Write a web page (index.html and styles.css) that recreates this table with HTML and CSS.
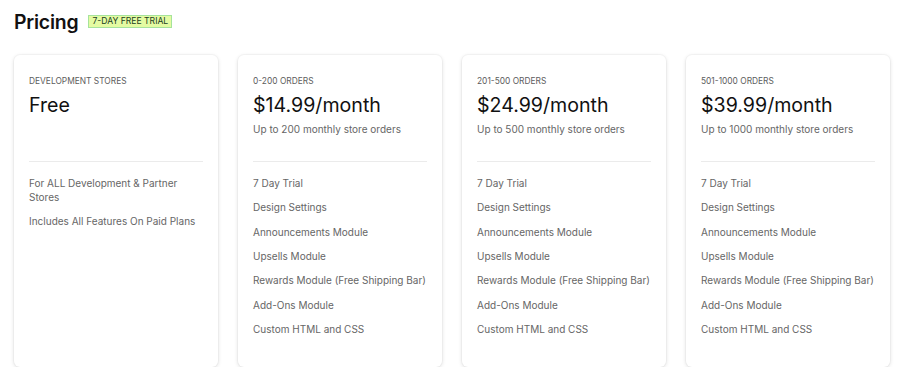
FILE: index.html
```html
<!DOCTYPE html>
<html lang="en">
<head>
<meta charset="utf-8">
<title>Pricing</title>
<link rel="stylesheet" href="styles.css">
</head>
<body>
<div class="page">
  <header class="head">
    <h1 class="title">Pricing</h1>
    <span class="badge">7-DAY FREE TRIAL</span>
  </header>
  <div class="plans">
    <section class="card">
      <div class="top">
        <div class="label">DEVELOPMENT STORES</div>
        <div class="price">Free</div>
      </div>
      <hr class="rule">
      <ul class="features">
        <li>For ALL Development &amp; Partner Stores</li>
        <li>Includes All Features On Paid Plans</li>
      </ul>
    </section>
    <section class="card">
      <div class="top">
        <div class="label">0-200 ORDERS</div>
        <div class="price">$14.99/month</div>
        <div class="sub">Up to 200 monthly store orders</div>
      </div>
      <hr class="rule">
      <ul class="features">
        <li>7 Day Trial</li>
        <li>Design Settings</li>
        <li>Announcements Module</li>
        <li>Upsells Module</li>
        <li>Rewards Module (Free Shipping Bar)</li>
        <li>Add-Ons Module</li>
        <li>Custom HTML and CSS</li>
      </ul>
    </section>
    <section class="card">
      <div class="top">
        <div class="label">201-500 ORDERS</div>
        <div class="price">$24.99/month</div>
        <div class="sub">Up to 500 monthly store orders</div>
      </div>
      <hr class="rule">
      <ul class="features">
        <li>7 Day Trial</li>
        <li>Design Settings</li>
        <li>Announcements Module</li>
        <li>Upsells Module</li>
        <li>Rewards Module (Free Shipping Bar)</li>
        <li>Add-Ons Module</li>
        <li>Custom HTML and CSS</li>
      </ul>
    </section>
    <section class="card">
      <div class="top">
        <div class="label">501-1000 ORDERS</div>
        <div class="price">$39.99/month</div>
        <div class="sub">Up to 1000 monthly store orders</div>
      </div>
      <hr class="rule">
      <ul class="features">
        <li>7 Day Trial</li>
        <li>Design Settings</li>
        <li>Announcements Module</li>
        <li>Upsells Module</li>
        <li>Rewards Module (Free Shipping Bar)</li>
        <li>Add-Ons Module</li>
        <li>Custom HTML and CSS</li>
      </ul>
    </section>
  </div>
</div>
</body>
</html>
```
FILE: styles.css
```css
* { box-sizing: border-box; }
html, body { margin: 0; padding: 0; background: #ffffff; }
body {
  font-family: Inter, "Noto Sans", "Liberation Sans", sans-serif;
  color: #111111;
}
.page { padding: 8px 14px 0 14px; }
.head {
  display: flex;
  align-items: center;
  gap: 10px;
  height: 28px;
}
.title {
  margin: 0;
  font-size: 19.4px;
  line-height: 28px;
  font-weight: 600;
  color: #111111;
  letter-spacing: -0.2px;
}
.badge {
  display: inline-block;
  font-size: 8.6px;
  line-height: 11px;
  padding: 0 3px;
  background: #e4fba2;
  border: 1px solid #a6e39b;
  color: #213d1f;
  margin-top: -1px;
}
.plans {
  margin-top: 19px;
  display: grid;
  grid-template-columns: repeat(4, 1fr);
  gap: 20px;
}
.card {
  background: #fff;
  border-radius: 6px;
  box-shadow: 0 0 0 1px rgba(0,0,0,0.025), 0 1px 4px rgba(0,0,0,0.13);
  padding: 20px 15px 31px 15px;
}
.top { height: 81px; }
.label {
  font-size: 8.4px;
  line-height: 12px;
  color: #5c5c5c;
}
.price {
  margin-top: 5px;
  font-size: 19.6px;
  line-height: 26px;
  color: #111;
  font-weight: 400;
}
.sub {
  margin-top: 3px;
  font-size: 10px;
  line-height: 16px;
  color: #666;
}
.rule {
  margin: 5px 0 0 0;
  border: 0;
  border-top: 1px solid #ebebeb;
  height: 0;
}
.features {
  list-style: none;
  margin: 14px 0 0 0;
  padding: 0;
}
.features li {
  font-size: 10px;
  line-height: 14px;
  color: #666;
  margin-bottom: 10.33px;
}
.features li:last-child { margin-bottom: 0; }
```
